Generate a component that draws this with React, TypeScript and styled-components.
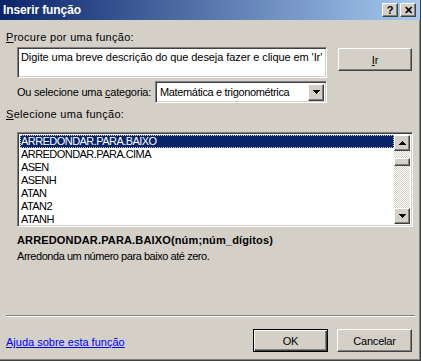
import React from 'react'
import styled, { createGlobalStyle, css } from 'styled-components'

const GlobalStyle = createGlobalStyle`
  html, body {
    margin: 0;
    padding: 0;
    background: #d4d0c8;
  }
  body {
    font-family: Tahoma, "Liberation Sans", Arial, sans-serif;
    font-size: 11px;
    color: #000;
  }
`

const raised = css`
  background: #d4d0c8;
  border: 1px solid;
  border-color: #fff #404040 #404040 #fff;
  box-shadow: inset -1px -1px #808080, inset 1px 1px #d4d0c8;
  box-sizing: border-box;
`

const sunken = css`
  background: #fff;
  border: 1px solid;
  border-color: #808080 #fff #fff #808080;
  box-shadow: inset 1px 1px #404040, inset -1px -1px #d4d0c8;
  box-sizing: border-box;
`

const Window = styled.div`
  width: 421px;
  height: 361px;
  box-sizing: border-box;
  background: #d4d0c8;
  border-right: 1px solid #404040;
  border-bottom: 1px solid #404040;
  box-shadow: inset -1px -1px #808080;
  display: flex;
  flex-direction: column;
`

const TitleBar = styled.div`
  height: 20px;
  background: linear-gradient(to right, #0a246a, #a6caf0);
  display: flex;
  align-items: center;
  padding: 0 4px 0 3px;
`

const Title = styled.div`
  flex: 1;
  color: #fff;
  font-weight: bold;
  font-size: 12px;
  letter-spacing: -0.1px;
`

const TitleButton = styled.div<{ $gap?: number }>`
  ${raised}
  width: 16px;
  height: 14px;
  margin-left: ${p => p.$gap ?? 0}px;
  display: flex;
  align-items: center;
  justify-content: center;
  font-weight: bold;
  font-size: 11px;
  line-height: 1;
`

const Body = styled.div`
  flex: 1;
  display: flex;
  flex-direction: column;
  padding: 11px 8px 0 6px;
`

const Label = styled.div<{ $top?: number }>`
  margin-top: ${p => p.$top ?? 0}px;
  line-height: 13px;
  height: 13px;
  letter-spacing: 0.3px;
  white-space: nowrap;
`

const SearchRow = styled.div`
  display: flex;
  align-items: flex-start;
  margin-top: 3px;
  margin-left: 11px;
`

const SearchBox = styled.div`
  ${sunken}
  width: 310px;
  height: 31px;
  padding: 3px 3px;
  line-height: 13px;
  letter-spacing: -0.08px;
  white-space: nowrap;
  overflow: hidden;
`

const Button = styled.div<{ $width: number; $default?: boolean; $gap?: number }>`
  ${raised}
  width: ${p => p.$width}px;
  height: 23px;
  margin-left: ${p => p.$gap ?? 0}px;
  display: flex;
  align-items: center;
  justify-content: center;
  letter-spacing: -0.2px;
  ${p => p.$default && css`
    border: 1px solid #000;
    box-shadow: inset 1px 1px #fff, inset -1px -1px #404040, inset -2px -2px #808080;
  `}
`

const IrButton = styled(Button)`
  margin-top: 1px;
`

const CategoryRow = styled.div`
  display: flex;
  align-items: center;
  margin-top: 3px;
  margin-left: 11px;
`

const CategoryLabel = styled.div`
  width: 138px;
  letter-spacing: -0.22px;
  white-space: nowrap;
`

const Combo = styled.div`
  ${sunken}
  width: 172px;
  height: 22px;
  display: flex;
  align-items: center;
  padding: 2px 2px 2px 4px;
`

const ComboText = styled.div`
  flex: 1;
  letter-spacing: -0.35px;
  white-space: nowrap;
`

const ArrowButton = styled.div<{ $h?: number }>`
  ${raised}
  width: 16px;
  height: ${p => p.$h ?? 16}px;
  display: flex;
  align-items: center;
  justify-content: center;
  flex-shrink: 0;
`

const ListBox = styled.div`
  ${sunken}
  margin-top: 11px;
  margin-left: 11px;
  width: 396px;
  height: 95px;
  padding: 2px;
  display: flex;
`

const Items = styled.div`
  flex: 1;
  display: flex;
  flex-direction: column;
  overflow: hidden;
`

const Item = styled.div<{ $selected?: boolean }>`
  height: 13px;
  line-height: 13px;
  padding-left: 1px;
  letter-spacing: -0.55px;
  white-space: nowrap;
  flex-shrink: 0;
  ${p => p.$selected && css`
    background: #0a246a;
    color: #fff;
    outline: 1px dotted #d4d0c8;
    outline-offset: -1px;
  `}
`

const ScrollBar = styled.div`
  width: 16px;
  display: flex;
  flex-direction: column;
  background-color: #fff;
  background-image: repeating-conic-gradient(#d4d0c8 0 25%, #fff 0 50%);
  background-size: 2px 2px;
`

const Track = styled.div`
  flex: 1;
`

const Thumb = styled.div`
  ${raised}
  height: 8px;
  margin-top: 7px;
`

const Signature = styled.div`
  margin-top: 6px;
  margin-left: 11px;
  font-weight: bold;
  font-size: 11px;
  letter-spacing: 0.15px;
  line-height: 14px;
`

const Description = styled.div`
  margin-top: 3px;
  margin-left: 11px;
  line-height: 13px;
  letter-spacing: -0.45px;
`

const Separator = styled.div`
  margin-top: auto;
  margin-right: -3px;
  height: 0;
  border-top: 1px solid #808080;
  border-bottom: 1px solid #fff;
`

const Footer = styled.div`
  display: flex;
  align-items: center;
  margin-top: 12px;
  margin-bottom: 8px;
`

const HelpLink = styled.a`
  flex: 1;
  color: #0000ff;
  text-decoration: underline;
  margin-top: 3px;
`

const Arrow: React.FC<{ up?: boolean }> = ({ up }) => (
  <svg width="7" height="4" viewBox="0 0 7 4">
    <path d={up ? 'M3 0h1v1h1v1h1v1h1v1H0V3h1V2h1V1h1z' : 'M0 0h7v1H6v1H5v1H4v1H3V3H2V2H1V1H0z'} fill="#000" />
  </svg>
)

const functions = ['ARREDONDAR.PARA.BAIXO', 'ARREDONDAR.PARA.CIMA', 'ASEN', 'ASENH', 'ATAN', 'ATAN2', 'ATANH']

const App: React.FC = () => {
  return (
    <>
      <GlobalStyle />
      <Window>
        <TitleBar>
          <Title>Inserir função</Title>
          <TitleButton>?</TitleButton>
          <TitleButton $gap={2}>✕</TitleButton>
        </TitleBar>

        <Body>
          <Label><u>P</u>rocure por uma função:</Label>
          <SearchRow>
            <SearchBox>Digite uma breve descrição do que deseja fazer e clique em 'Ir'</SearchBox>
            <IrButton $width={74} $gap={11}><u>I</u>r</IrButton>
          </SearchRow>

          <CategoryRow>
            <CategoryLabel>Ou selecione uma <u>c</u>ategoria:</CategoryLabel>
            <Combo>
              <ComboText>Matemática e trigonométrica</ComboText>
              <ArrowButton $h={17}><Arrow /></ArrowButton>
            </Combo>
          </CategoryRow>

          <Label $top={5}><u>S</u>elecione uma função:</Label>
          <ListBox>
            <Items>
              {functions.map((f, i) => (
                <Item key={f} $selected={i === 0}>{f}</Item>
              ))}
            </Items>
            <ScrollBar>
              <ArrowButton><Arrow up /></ArrowButton>
              <Track><Thumb /></Track>
              <ArrowButton><Arrow /></ArrowButton>
            </ScrollBar>
          </ListBox>

          <Signature>ARREDONDAR.PARA.BAIXO(núm;núm_dígitos)</Signature>
          <Description>Arredonda um número para baixo até zero.</Description>

          <Separator />
          <Footer>
            <HelpLink href="#">Ajuda sobre esta função</HelpLink>
            <Button $width={75} $default>OK</Button>
            <Button $width={75} $gap={9}>Cancelar</Button>
          </Footer>
        </Body>
      </Window>
    </>
  )
}

export default App
